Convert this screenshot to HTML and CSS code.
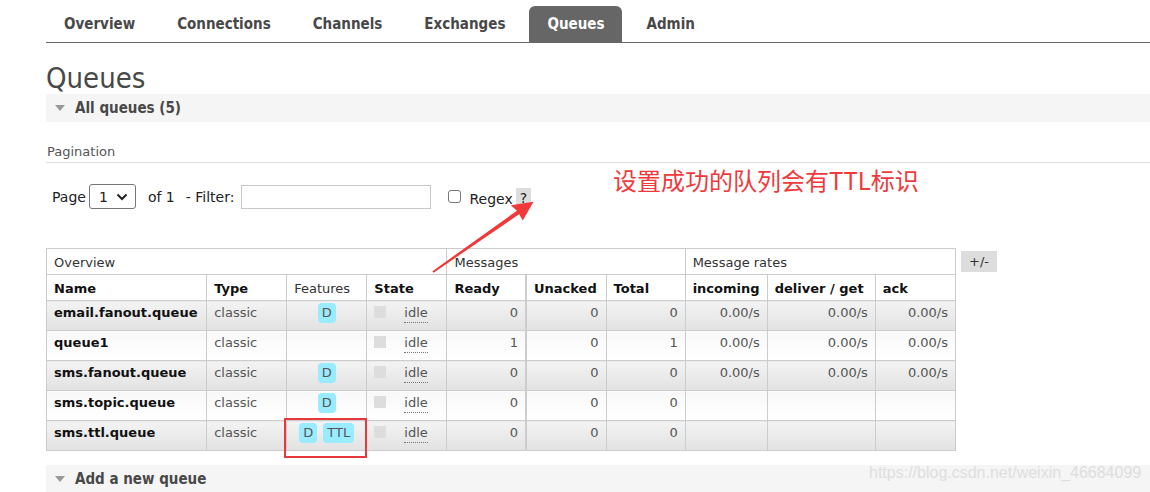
FILE: index.html
```html
<!DOCTYPE html>
<html>
<head>
<meta charset="utf-8">
<title>Queues</title>
<link rel="stylesheet" href="styles.css">
</head>
<body>
<div class="page">
  <ul class="tabs">
    <li>Overview</li>
    <li>Connections</li>
    <li>Channels</li>
    <li>Exchanges</li>
    <li class="active">Queues</li>
    <li>Admin</li>
  </ul>

  <h1 class="title">Queues</h1>

  <div class="section"><span class="tri"></span>All queues (5)</div>

  <div class="pag-label">Pagination</div>

  <div class="filter">
    <span>Page</span>
    <span class="select">1
      <svg width="12" height="8" viewBox="0 0 12 8"><path d="M1.5 1.5 L6 6 L10.5 1.5" fill="none" stroke="#222" stroke-width="2"/></svg>
    </span>
    <span class="of">of 1</span>
    <span class="flabel">- Filter:</span>
    <span class="finput"></span>
    <span class="check"></span>
    <span class="regex">Regex</span>
    <span class="help">?</span>
  </div>

  <div class="table-row">
    <table class="queues">
      <colgroup>
        <col class="c-name"><col class="c-type"><col class="c-feat"><col class="c-state">
        <col class="c-ready"><col class="c-unacked"><col class="c-total">
        <col class="c-inc"><col class="c-deliver"><col class="c-ack">
      </colgroup>
      <thead>
        <tr class="group">
          <th colspan="4">Overview</th>
          <th colspan="3">Messages</th>
          <th colspan="3">Message rates</th>
        </tr>
        <tr class="heads">
          <th>Name</th><th>Type</th><th class="plain">Features</th><th>State</th>
          <th>Ready</th><th class="sep">Unacked</th><th>Total</th>
          <th>incoming</th><th>deliver / get</th><th>ack</th>
        </tr>
      </thead>
      <tbody>
        <tr class="odd">
          <td class="name">email.fanout.queue</td><td class="muted">classic</td>
          <td class="feat"><span class="badge">D</span></td>
          <td><span class="state"><span class="sq"></span><span class="idle">idle</span></span></td>
          <td class="num">0</td><td class="num sep">0</td><td class="num">0</td>
          <td class="num">0.00/s</td><td class="num">0.00/s</td><td class="num">0.00/s</td>
        </tr>
        <tr class="even">
          <td class="name">queue1</td><td class="muted">classic</td>
          <td class="feat"></td>
          <td><span class="state"><span class="sq"></span><span class="idle">idle</span></span></td>
          <td class="num">1</td><td class="num sep">0</td><td class="num">1</td>
          <td class="num">0.00/s</td><td class="num">0.00/s</td><td class="num">0.00/s</td>
        </tr>
        <tr class="odd">
          <td class="name">sms.fanout.queue</td><td class="muted">classic</td>
          <td class="feat"><span class="badge">D</span></td>
          <td><span class="state"><span class="sq"></span><span class="idle">idle</span></span></td>
          <td class="num">0</td><td class="num sep">0</td><td class="num">0</td>
          <td class="num">0.00/s</td><td class="num">0.00/s</td><td class="num">0.00/s</td>
        </tr>
        <tr class="even">
          <td class="name">sms.topic.queue</td><td class="muted">classic</td>
          <td class="feat"><span class="badge">D</span></td>
          <td><span class="state"><span class="sq"></span><span class="idle">idle</span></span></td>
          <td class="num">0</td><td class="num sep">0</td><td class="num">0</td>
          <td class="num"></td><td class="num"></td><td class="num"></td>
        </tr>
        <tr class="odd">
          <td class="name">sms.ttl.queue</td><td class="muted">classic</td>
          <td class="feat"><span class="badge">D</span><span class="badge">TTL</span></td>
          <td><span class="state"><span class="sq"></span><span class="idle">idle</span></span></td>
          <td class="num">0</td><td class="num sep">0</td><td class="num">0</td>
          <td class="num"></td><td class="num"></td><td class="num"></td>
        </tr>
      </tbody>
    </table>
    <span class="plusminus">+/-</span>
  </div>

  <div class="section add"><span class="tri"></span>Add a new queue</div>
</div>

<div class="note">设置成功的队列会有TTL标识</div>
<svg class="arrow" width="1150" height="492" viewBox="0 0 1150 492">
  <polygon points="432.4,271.3 516.9,210.7 510.8,205.2 533.5,201.8 522.8,220.6 519.2,214.2 433.6,272.7" fill="#f0393b"/>
</svg>
<div class="redbox"></div>
<div class="watermark">https://blog.csdn.net/weixin_46684099</div>
</body>
</html>
```

FILE: styles.css
```css
html, body {
  margin: 0;
  padding: 0;
  background: #fff;
}
body {
  position: relative;
  width: 1150px;
  height: 492px;
  overflow: hidden;
  font-family: "DejaVu Sans", Verdana, sans-serif;
  font-size: 13px;
  color: #484848;
}
.page {
  padding-left: 46px;
}

/* tabs */
.tabs {
  display: flex;
  list-style: none;
  margin: 6px 0 0;
  padding: 0;
  border-bottom: 1px solid #666;
}
.tabs li {
  height: 36px;
  line-height: 37px;
  padding: 0 18px;
  margin-right: 6px;
  font-family: "DejaVu Sans Condensed", "DejaVu Sans", sans-serif;
  font-stretch: condensed;
  font-weight: bold;
  font-size: 15px;
  color: #484848;
}
.tabs li.active {
  background: #666;
  color: #fff;
  border-radius: 6px 6px 0 0;
}

.title {
  margin: 19px 0 0;
  font-family: "DejaVu Sans Condensed", "DejaVu Sans", sans-serif;
  font-stretch: condensed;
  font-weight: normal;
  font-size: 29px;
  line-height: 32px;
  color: #484848;
}

.section {
  display: flex;
  align-items: center;
  height: 28px;
  background: #f5f5f5;
  padding-left: 9px;
  font-family: "DejaVu Sans Condensed", "DejaVu Sans", sans-serif;
  font-stretch: condensed;
  font-weight: bold;
  font-size: 15px;
  color: #484848;
}
.tri {
  width: 0;
  height: 0;
  border-left: 5px solid transparent;
  border-right: 5px solid transparent;
  border-top: 6px solid #999;
  margin-right: 10px;
}
.section.add {
  margin-top: 14px;
}

.pag-label {
  margin-top: 22px;
  line-height: 16px;
  padding-left: 1px;
  padding-bottom: 2px;
  border-bottom: 1px solid #ddd;
  color: #555;
}

.filter {
  display: flex;
  align-items: center;
  height: 25px;
  margin-top: 21px;
  padding-left: 6px;
  font-size: 14px;
  color: #222;
}
.select {
  box-sizing: border-box;
  width: 47px;
  height: 25px;
  margin-left: 3px;
  border: 1px solid #767676;
  border-radius: 3px;
  display: flex;
  align-items: center;
  justify-content: space-between;
  padding: 0 7px 0 9px;
  font-size: 14px;
}
.of {
  margin-left: 12px;
}
.flabel {
  margin-left: 11px;
}
.finput {
  box-sizing: border-box;
  width: 190px;
  height: 24px;
  margin-left: 7px;
  border: 1px solid #c8c8c8;
}
.check {
  box-sizing: border-box;
  width: 13px;
  height: 13px;
  margin-left: 17px;
  border: 1px solid #767676;
  border-radius: 3px;
}
.regex {
  margin-left: 8px;
  margin-top: 4px;
}
.help {
  margin-left: 3px;
  margin-top: 3px;
  background: #ddd;
  padding: 0 4px;
  line-height: 20px;
}

/* table */
.table-row {
  display: flex;
  align-items: flex-start;
  margin-top: 39px;
}
.queues {
  border-collapse: collapse;
  table-layout: fixed;
  width: 910px;
  border: 1px solid #ccc;
}
.c-name { width: 160px; }
.c-type { width: 80px; }
.c-feat { width: 80px; }
.c-state { width: 80px; }
.c-ready { width: 79px; }
.c-unacked { width: 80px; }
.c-total { width: 79px; }
.c-inc { width: 82px; }
.c-deliver { width: 108px; }
.c-ack { width: 80px; }

.queues th, .queues td {
  border: 1px solid #ccc;
  padding: 4px 7px 1px;
  line-height: 20px;
  text-align: left;
  white-space: nowrap;
  overflow: hidden;
}
.queues .group th {
  font-weight: normal;
  color: #333;
}
.queues .heads th {
  font-weight: bold;
  color: #111;
}
.queues .heads th.plain {
  font-weight: normal;
  color: #333;
}
.queues .sep {
  border-left: 2px solid #ccc;
}
.queues td {
  padding: 2px 7px 7px;
  vertical-align: top;
  color: #555;
}
.queues tr.odd td {
  background: linear-gradient(#f3f3f3, #e2e2e2);
}
.queues tr.even td {
  background: linear-gradient(#f8f8f8, #fff);
}
.queues td.name {
  font-weight: bold;
  color: #111;
}
.queues td.num {
  text-align: right;
}
.queues td.feat {
  text-align: center;
  padding-left: 0;
  padding-right: 0;
}
.badge {
  display: inline-block;
  background: #99ebff;
  color: #555;
  border-radius: 4px;
  padding: 0 4px;
  line-height: 20px;
  margin: 0 3px;
}
.state {
  display: flex;
  align-items: flex-start;
}
.sq {
  width: 12px;
  height: 12px;
  background: #ddd;
  margin-right: 18px;
  margin-top: 3px;
}
.idle {
  line-height: 19px;
  border-bottom: 1px dotted #777;
}
.plusminus {
  margin-left: 5px;
  margin-top: 3px;
  background: #ddd;
  padding: 0 8px;
  line-height: 21px;
  color: #333;
}

/* annotations over the screenshot */
.note {
  position: absolute;
  left: 613px;
  top: 166px;
  font-family: "Noto Sans CJK SC", "DejaVu Sans", sans-serif;
  font-size: 24px;
  line-height: 28px;
  color: #f0393b;
}
.arrow {
  position: absolute;
  left: 0;
  top: 0;
  pointer-events: none;
}
.redbox {
  position: absolute;
  left: 284px;
  top: 418px;
  width: 83px;
  height: 40px;
  box-sizing: border-box;
  border: 2px solid #e8383b;
}
.watermark {
  position: absolute;
  left: 869px;
  top: 463px;
  font-family: "Liberation Sans", Arial, sans-serif;
  font-size: 16px;
  line-height: 20px;
  color: #dedede;
}
```
